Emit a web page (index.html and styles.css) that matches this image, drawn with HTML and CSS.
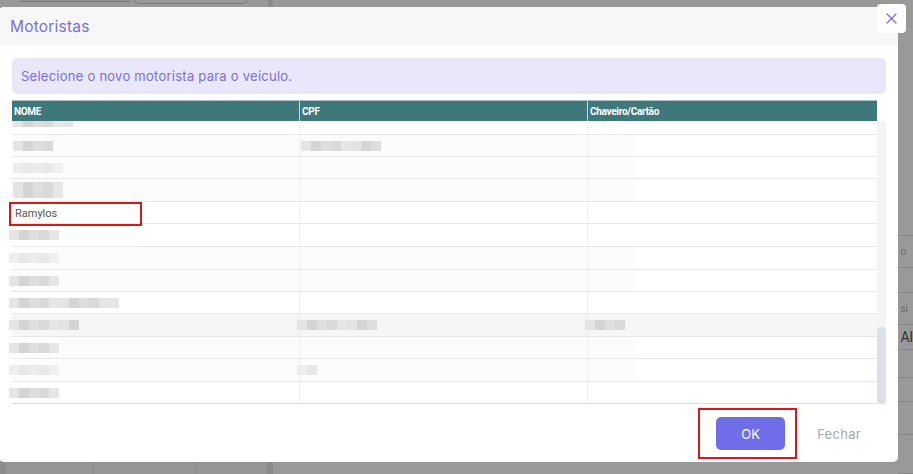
FILE: index.html
```html
<!DOCTYPE html>
<html lang="pt-BR">
<head>
<meta charset="utf-8">
<title>Motoristas</title>
<link rel="stylesheet" href="styles.css">
</head>
<body>
<div class="page">
  <div class="page-left">
    <div class="page-top">
      <div class="pfield dark"></div>
      <div class="pfield outline"></div>
    </div>
    <div class="page-bottom">
      <div class="pcell c1"></div>
      <div class="pcell c2"></div>
      <div class="pcell c3"></div>
      <div class="pcell c4"></div>
    </div>
  </div>
  <div class="page-divider"></div>
  <div class="page-right">
    <div class="prow h1"></div>
    <div class="prow h2"><span class="ptext small">o</span></div>
    <div class="prow h3"></div>
    <div class="prow h4"><span class="ptext small">si</span></div>
    <div class="prow h5"><span class="ptext big">Al</span></div>
    <div class="prow h6"></div>
    <div class="prow h7"></div>
    <div class="prow h8"></div>
    <div class="prow h9"></div>
  </div>
</div>

<div class="overlay">
  <div class="modal">
    <div class="modal-header">
      <h1 class="modal-title">Motoristas</h1>
    </div>
    <button class="close" type="button" aria-label="Fechar">
      <svg width="11" height="11" viewBox="0 0 11 11"><path d="M1 1 L10 10 M10 1 L1 10" stroke="#7b6fd8" stroke-width="1.4" fill="none" stroke-linecap="round"/></svg>
    </button>
    <div class="modal-body">
      <div class="alert">Selecione o novo motorista para o veículo.</div>
      <div class="table">
        <div class="thead">
          <div class="th">NOME</div>
          <div class="th">CPF</div>
          <div class="th">Chaveiro/Cartão</div>
        </div>
        <div class="tbody">
          <div class="rows">
            <div class="tr r-part">
              <div class="td"><span class="blur w60 top"></span></div><div class="td"></div><div class="td"></div>
            </div>
            <div class="tr r22 band">
              <div class="td"><span class="blur w40"></span></div><div class="td"><span class="blur w80"></span></div><div class="td"></div>
            </div>
            <div class="tr r22 band">
              <div class="td"><span class="blur w50 light"></span></div><div class="td"></div><div class="td"></div>
            </div>
            <div class="tr r23 band">
              <div class="td"><span class="blur w50 tall"></span></div><div class="td"></div><div class="td"></div>
            </div>
            <div class="tr r22">
              <div class="td name">Ramylos<span class="mark-name"></span></div><div class="td"></div><div class="td"></div>
            </div>
            <div class="tr r23">
              <div class="td shift"><span class="blur w50"></span></div><div class="td"></div><div class="td"></div>
            </div>
            <div class="tr r23 band">
              <div class="td shift"><span class="blur w50 light"></span></div><div class="td"></div><div class="td"></div>
            </div>
            <div class="tr r22 band">
              <div class="td shift"><span class="blur w50"></span></div><div class="td"></div><div class="td"></div>
            </div>
            <div class="tr r22">
              <div class="td shift"><span class="blur w110"></span></div><div class="td"></div><div class="td"></div>
            </div>
            <div class="tr r23 hover">
              <div class="td shift"><span class="blur w70"></span></div><div class="td shift"><span class="blur w80"></span></div><div class="td shift"><span class="blur w40"></span></div>
            </div>
            <div class="tr r22 band">
              <div class="td shift"><span class="blur w50"></span></div><div class="td"></div><div class="td"></div>
            </div>
            <div class="tr r23 band">
              <div class="td shift"><span class="blur w50 light"></span></div><div class="td shift"><span class="blur w20 light"></span></div><div class="td"></div>
            </div>
            <div class="tr r21">
              <div class="td shift"><span class="blur w50"></span></div><div class="td"></div><div class="td"></div>
            </div>
          </div>
          <div class="scroll"><div class="thumb"></div></div>
        </div>
      </div>
    </div>
    <div class="modal-footer">
      <div class="ok-wrap">
        <button class="btn-ok" type="button">OK</button>
        <span class="mark-ok"></span>
      </div>
      <button class="btn-close" type="button">Fechar</button>
    </div>
  </div>
</div>
</body>
</html>
```

FILE: styles.css
```css
* { box-sizing: border-box; }
html, body { margin: 0; padding: 0; }
body {
  width: 913px;
  height: 474px;
  overflow: hidden;
  position: relative;
  background: #999999;
  font-family: Roboto, "Liberation Sans", sans-serif;
}

/* dimmed page behind the modal */
.page {
  display: flex;
  height: 474px;
  background: #999999;
}
.page-left {
  width: 270px;
  display: flex;
  flex-direction: column;
  justify-content: space-between;
}
.page-top {
  display: flex;
  gap: 5px;
  padding-left: 20px;
}
.pfield.dark {
  width: 110px;
  height: 2px;
  background: #8f8f8f;
  border-bottom: 1px solid #7f7f7f;
}
.pfield.outline {
  width: 112px;
  height: 4px;
  border: 1px solid #7d7d7d;
  border-top: none;
  border-radius: 0 0 4px 4px;
}
.page-bottom {
  display: flex;
  height: 12px;
}
.pcell { height: 12px; border-right: 1px solid #8a8a8a; }
.pcell.c1 { width: 6px; background: #8d8d8d; border-right: none; }
.pcell.c2 { width: 88px; background: #959595; }
.pcell.c3 { width: 103px; background: #959595; }
.pcell.c4 { flex: 1; background: #959595; }
.page-divider { width: 5px; background: #8b8b8b; }
.page-right {
  flex: 1;
  display: flex;
  flex-direction: column;
  padding-top: 180px;
  padding-left: 625px;
}
.prow {
  border-bottom: 1px solid #858585;
  display: flex;
  align-items: center;
  padding-left: 2px;
}
.prow.h1 { height: 57px; }
.prow.h2 { height: 33px; }
.prow.h3 { height: 25px; }
.prow.h4 { height: 33px; }
.prow.h5 { height: 25px; }
.prow.h6 { height: 29px; }
.prow.h7 { height: 25px; }
.prow.h8 { height: 33px; }
.prow.h9 { height: 40px; }
.ptext { color: #5a5a5a; }
.ptext.small { font-size: 10px; color: #6d6d6d; }
.ptext.big { font-size: 14px; color: #333; }

/* overlay + modal */
.overlay {
  position: absolute;
  inset: 0;
  padding-top: 7px;
}
.modal {
  position: relative;
  margin-left: -1px;
  width: 899px;
  height: 455px;
  background: #ffffff;
  border-radius: 5px;
  display: flex;
  flex-direction: column;
}
.modal-header {
  height: 38px;
  background: #f7f7f7;
  border-radius: 5px 5px 0 0;
  display: flex;
  align-items: center;
  padding-left: 11px;
}
.modal-title {
  margin: 0;
  font-family: Inter, "Open Sans", sans-serif;
  font-size: 15.5px;
  font-weight: 400;
  color: #7b6fd8;
  letter-spacing: 0.2px;
}
.close {
  position: absolute;
  left: 878px;
  top: -3px;
  width: 29px;
  height: 29px;
  padding: 0;
  border: none;
  background: #ffffff;
  border-radius: 4px;
  display: flex;
  align-items: center;
  justify-content: center;
}
.modal-body {
  padding: 13px 12px 0 13px;
}
.alert {
  height: 36px;
  background: #e9e7fa;
  border-radius: 5px;
  padding-left: 9px;
  display: flex;
  align-items: center;
  font-family: Inter, "Open Sans", sans-serif;
  font-size: 13px;
  color: #7b6fd8;
  letter-spacing: 0.25px;
}
.table { margin-top: 6px; }
.thead {
  display: grid;
  grid-template-columns: 288px 288px 289px;
  width: 865px;
  height: 21px;
  background: #3e787a;
  border-top: 1px solid #a9c2c3;
}
.th {
  color: #ffffff;
  font-size: 10px;
  font-weight: 700;
  letter-spacing: -0.3px;
  padding-left: 2px;
  display: flex;
  align-items: center;
  border-right: 1px solid #c5d6d6;
}
.th:last-child { border-right: none; }
.tbody {
  display: flex;
  height: 283px;
}
.rows {
  width: 865px;
  display: flex;
  flex-direction: column;
  border-bottom: 1px solid #dcdcdc;
}
.tr {
  display: grid;
  grid-template-columns: 288px 288px 289px;
  border-bottom: 1px solid #e7e7e7;
  flex-shrink: 0;
}
.tr:last-child { border-bottom: none; }
.tr.r-part { height: 14px; }
.tr.r21 { height: 21px; }
.tr.r22 { height: 22px; }
.tr.r23 { height: 23px; }
.tr.band { background: linear-gradient(90deg, #fcfcfc 0 623px, #ffffff 623px); }
.tr.hover { background: #f6f6f6; }
.td {
  position: relative;
  border-right: 1px solid #efefef;
  display: flex;
  align-items: center;
  padding-left: 1px;
}
.td:last-child { border-right: none; }
.td.shift { margin-left: -3px; padding-left: 0; }
.td.name {
  padding-left: 3px;
  padding-top: 1px;
  font-size: 11px;
  color: #555555;
}
.blur {
  display: block;
  height: 10px;
  background: repeating-linear-gradient(90deg, #e4e4e4 0 10px, #d4d4d4 10px 20px, #dedede 20px 30px, #d9d9d9 30px 40px, #e6e6e6 40px 50px);
}
.blur.light {
  background: repeating-linear-gradient(90deg, #eeeeee 0 10px, #e7e7e7 10px 20px, #ececec 20px 30px, #e9e9e9 30px 40px, #f0f0f0 40px 50px);
}
.blur.tall { height: 16px; }
.blur.top { height: 6px; align-self: flex-start; }
.w20 { width: 20px; }
.w40 { width: 40px; }
.w50 { width: 50px; }
.w60 { width: 60px; }
.w70 { width: 70px; }
.w80 { width: 80px; }
.w110 { width: 110px; }
.mark-name {
  position: absolute;
  left: -3px;
  top: 0;
  width: 133px;
  height: 24px;
  border: 2px solid #d9161c;
}
.scroll {
  width: 9px;
  background: #f4f4f4;
  display: flex;
  flex-direction: column;
  justify-content: flex-end;
}
.thumb {
  height: 77px;
  background: #dce1e7;
  border-radius: 4px;
}
.modal-footer {
  flex: 1;
  display: flex;
  justify-content: flex-end;
  align-items: flex-start;
  padding-top: 13px;
  padding-right: 37px;
  gap: 32px;
}
.ok-wrap { position: relative; }
.btn-ok {
  display: block;
  width: 69px;
  height: 33px;
  border: none;
  border-radius: 5px;
  background: #6f6ee8;
  color: #ffffff;
  font-family: Inter, "Open Sans", sans-serif;
  font-size: 13px;
  padding: 0;
}
.mark-ok {
  position: absolute;
  left: -18px;
  top: -9px;
  width: 99px;
  height: 51px;
  border: 2px solid #d9161c;
}
.btn-close {
  border: none;
  background: transparent;
  padding: 0;
  height: 33px;
  font-family: Inter, "Open Sans", sans-serif;
  font-size: 13px;
  color: #a9a9a9;
  letter-spacing: 0.3px;
}
```
